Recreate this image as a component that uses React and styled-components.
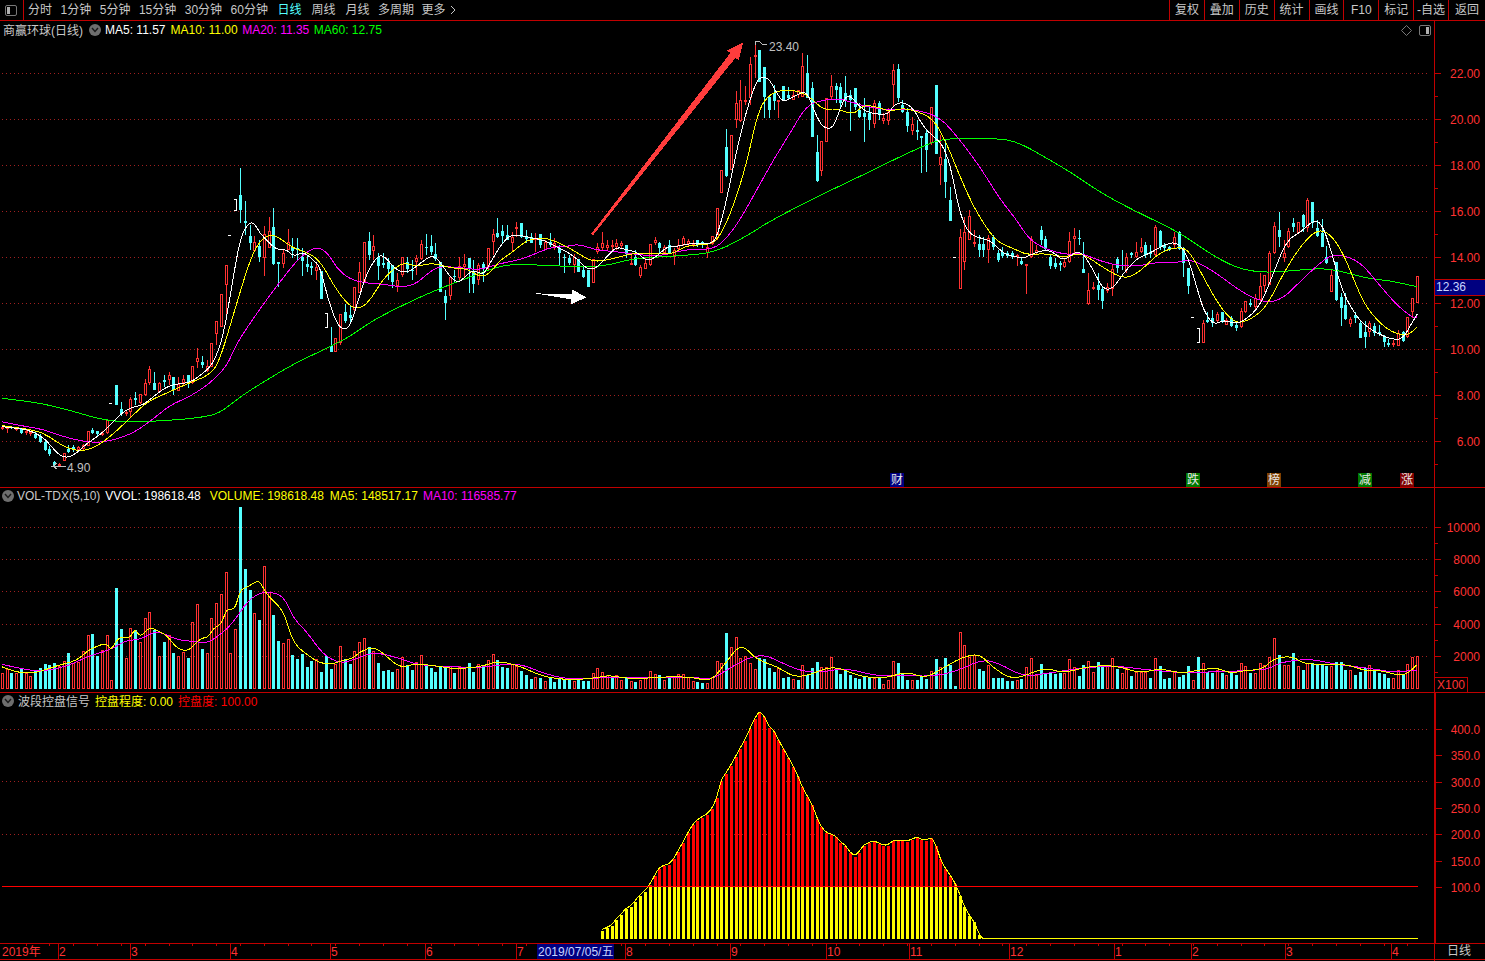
import React from "react";
import styled, { createGlobalStyle } from "styled-components";

const FONT = '"Liberation Sans", "Noto Sans CJK SC", sans-serif';
const RED = "#ff3232";
const CYAN = "#54ffff";
const LINE = "#c00000";
const GRID = "#a02020";

// x of candle number i
const barX = (i) => Math.round(1.75 + 4.765 * i);

// chart points were read off crops of the chart, so they carry crop offset and scale
const crop = (flat, ox, oy, sx = 3, sy = 3) => {
  const pts = [];
  for (let i = 0; i < flat.length; i += 2) pts.push([ox + flat[i] / sx, oy + flat[i + 1] / sy]);
  return pts;
};

const smooth = (pts) => {
  let d = `M${pts[0][0]} ${pts[0][1]}`;
  for (let i = 1; i < pts.length - 1; i++) {
    const mx = (pts[i][0] + pts[i + 1][0]) / 2;
    const my = (pts[i][1] + pts[i + 1][1]) / 2;
    d += `Q${pts[i][0]} ${pts[i][1]} ${mx} ${my}`;
  }
  const last = pts[pts.length - 1];
  return d + `L${last[0]} ${last[1]}`;
};

// kind, body top, body bottom, wick top, wick bottom
const CANDLE_TEXT = `
r427 429 426 430,r427 428 426 433,c427 428 426 429,r428 429 427 431,c429 433 428 434,r431 432 429 435,r432 433 431 436,c434 438 432 439,c436 442 434 443,c442 450 440 451,
c449 454 446 456,c462 465 461 466,r464 466 463 466,r453 461 453 461,c449 452 445 453,c447 450 445 452,r447 450 446 451,r445 449 444 450,r431 446 431 446,c430 433 428 434,
c431 434 431 437,r433 435 431 436,r420 433 420 434,w403 403 403 403,c385 405 385 405,c409 414 402 416,r412 414 410 416,r399 412 397 417,c398 400 392 405,r394 403 394 404,
r383 395 379 396,r369 383 366 385,c383 390 372 390,r383 392 382 392,c380 382 375 387,r375 380 372 385,c377 390 377 395,r384 391 377 391,r379 383 375 385,c375 383 375 388,
r366 383 366 384,r358 362 348 368,c362 365 356 368,r366 371 360 372,r343 367 343 367,r321 334 321 345,r294 327 294 327,r265 285 265 315,w235 235 235 235,w199 211 199 211,
c195 210 168 223,c221 223 201 235,c236 243 225 250,r242 251 236 252,c246 257 240 262,r234 258 226 276,r231 248 217 248,c227 264 208 265,c262 264 262 287,r253 264 249 268,
r242 250 229 250,c247 251 238 258,c248 250 238 260,c257 261 248 276,c264 267 255 272,c266 268 262 275,r267 271 263 280,c271 299 271 299,w313 328 313 328,c346 352 327 352,
r338 352 338 352,r314 343 314 345,c312 321 304 323,c315 318 305 323,r287 310 287 312,r272 293 262 293,r242 283 242 283,c241 255 232 260,r246 251 235 260,c257 266 253 280,
c263 265 253 268,c262 269 258 280,c265 282 265 288,r280 286 273 292,r257 275 257 277,c262 269 257 273,c270 271 260 280,r258 262 255 275,r244 259 240 260,c247 248 234 255,
c246 252 235 255,c254 259 243 261,c262 292 262 292,c296 303 290 320,r277 296 277 300,c276 277 270 283,r266 278 257 282,r264 267 254 278,c258 268 258 293,c272 284 260 293,
r265 280 263 285,c264 268 262 282,r248 267 248 270,r234 242 229 255,c233 237 218 238,c231 236 225 243,c235 240 225 240,r237 243 232 252,r227 229 222 237,c223 237 223 238,
c237 239 230 243,c237 243 233 243,r238 240 233 252,c234 245 234 248,r242 250 240 250,c242 245 233 247,r243 247 238 250,c248 253 245 265,c257 258 254 273,c258 263 255 265,
r257 265 254 273,c259 272 259 272,c270 277 267 278,c270 287 270 287,r259 283 259 283,r247 252 243 254,r243 248 232 250,r245 248 240 250,r245 247 240 250,r243 247 239 250,
r243 246 241 248,c245 254 245 258,r263 265 253 265,c257 265 250 266,r267 276 265 278,r263 269 257 269,r244 265 244 266,r240 243 237 245,c243 248 242 253,r247 253 245 254,
c245 254 240 254,r250 257 248 265,r245 249 239 250,r238 245 236 246,r241 244 239 247,r243 245 240 247,c240 245 240 247,c242 245 241 248,r247 253 245 258,r236 244 236 245,
r208 238 208 240,r170 193 170 193,c147 176 129 177,r135 170 135 170,r103 120 91 128,r100 121 80 122,r100 102 86 105,r64 98 57 105,r55 57 45 78,c50 82 50 82,
c67 97 67 118,c97 110 97 118,c93 101 85 110,r100 102 102 118,c86 100 86 100,c95 98 87 100,r95 100 90 100,r90 95 90 98,r66 97 53 97,c73 98 55 98,
c88 137 82 137,c152 181 135 182,r141 171 141 176,r98 142 98 142,r86 97 75 100,c86 90 83 103,c87 103 83 107,c93 100 76 107,c95 100 90 131,c88 107 88 110,
c110 117 103 118,c113 117 98 142,c113 120 107 130,r103 124 100 128,c103 115 101 120,r118 121 113 124,r112 121 108 125,r70 85 64 107,c69 98 64 102,c105 112 100 113,
c112 126 108 132,r124 131 117 135,c130 132 120 140,c136 138 136 173,c133 150 130 172,r107 143 107 145,c85 154 85 154,r157 165 135 185,c159 182 140 198,c200 221 187 221,
w257 257 257 257,r237 289 229 289,r232 262 217 270,r216 240 210 240,r242 243 230 247,c244 250 235 257,c244 250 237 257,r238 250 235 263,c237 247 235 250,c253 260 250 262,
c252 256 247 258,c253 256 251 258,c253 257 251 259,r255 257 254 266,c261 264 257 265,r264 266 264 294,r239 257 236 258,r250 253 245 254,c230 240 226 245,c239 249 236 250,
c257 266 255 269,c263 267 258 269,c263 265 261 271,r262 267 258 268,r241 262 232 263,r236 239 228 253,c238 239 230 245,c269 273 242 273,r290 304 273 305,r287 289 282 290,
c285 290 273 300,c289 301 287 309,r287 291 283 293,r269 289 265 296,c259 268 257 273,c265 266 250 270,r257 270 253 273,c253 255 252 258,r252 257 242 258,r247 252 238 253,
c245 255 242 258,c252 254 245 258,r227 255 225 256,c231 247 230 250,c245 248 243 251,c247 250 246 251,r237 245 232 248,c232 249 231 250,c249 263 247 277,c268 286 268 294,
w317 317 317 317,w328 343 328 343,r323 343 320 343,c320 322 312 323,c318 323 310 327,r314 321 312 323,c312 322 312 323,r320 325 318 325,c318 326 316 327,c325 328 323 331,
r311 327 308 328,r301 312 301 313,c303 305 299 307,r298 307 294 309,r286 300 273 302,r275 286 275 292,r253 285 251 285,r226 253 222 254,c230 237 212 247,r253 258 240 262,
r231 247 228 248,c223 227 218 232,r222 233 222 234,c215 227 214 232,r200 228 198 232,c202 223 202 228,c228 236 220 237,c233 247 219 247,c257 263 246 264,r275 292 270 292,
c262 300 262 301,c297 308 293 326,c305 319 293 320,r319 324 317 327,c315 318 312 323,c323 338 321 338,c332 337 321 348,r323 332 321 337,c326 333 323 336,c332 334 325 336,
c337 342 335 347,c343 345 339 347,r343 344 340 347,r333 346 330 346,c332 341 331 342,r317 337 317 338,r298 312 298 318,r276 303 276 303`;

const CANDLES = [...CANDLE_TEXT.matchAll(/([rcw])(\d+) (\d+) (\d+) (\d+)/g)].map((m) => ({
  kind: m[1],
  top: +m[2],
  bot: +m[3],
  hi: +m[4],
  lo: +m[5],
}));

const MA5 = [
  ...crop([5,800,60,805,100,815,140,840,170,880,200,895,230,880,260,850,300,825,330,795,370,755,400,740,430,735,460,710,500,680,530,672,570,668,610,640,640,610,670,530,700,350,720,240,740,195,760,185,780,220,800,240,830,270,860,268,880,290,910,275,940,300,960,320,985,420,1010,490,1030,510,1050,500,1075,420,1100,340,1130,290,1150,285,1180,320,1200,335,1230,335,1260,310,1300,282,1330,320,1350,350,1375,370,1400,345,1420,330,1450,345,1470,310], 0, 160),
  ...crop([0,648,30,615,60,615,100,625,130,630,170,650,200,665,230,685,260,718,290,715,320,680,350,650,380,660,410,665,440,695,470,680,500,650,530,650,570,640,630,643,650,625,680,510,710,360,740,240,770,150,790,140,810,150,830,190,850,217,880,200,920,180,945,250,970,295,1000,295,1020,235,1040,195,1060,205,1080,232,1110,250,1165,255,1180,225,1210,215,1240,235,1270,290,1300,320,1325,340,1350,400,1375,530,1395,590,1420,620,1470,630], 500, 30),
  ...crop([0,180,20,195,70,205,90,195,130,180,160,185,190,215,240,175,280,240,310,300,340,295,370,250,410,205,450,190,490,165,530,155,560,190,590,290,610,360,640,405,670,390,700,400,730,395,780,350,820,250,860,150,905,125,940,90,965,100,990,170,1020,280,1040,330,1080,395,1130,430,1180,450,1210,445,1235,400,1252,372], 1000, 190),
];

const MA10 = [
  ...crop([5,797,100,808,150,830,190,860,250,877,310,848,380,785,440,725,510,695,560,672,630,645,660,600,710,430,750,300,780,240,815,222,840,235,880,265,930,280,965,310,1000,375,1040,430,1070,448,1105,430,1150,355,1190,320,1215,308,1250,320,1300,308,1350,325,1400,325,1440,352,1470,340], 0, 160),
  ...crop([0,690,40,665,80,630,130,622,170,635,210,655,250,680,275,693,310,693,370,678,400,670,430,672,470,670,520,672,560,645,630,645,660,620,700,530,740,400,775,240,810,190,860,178,900,185,935,205,970,240,1010,235,1060,255,1090,225,1130,230,1170,245,1200,235,1240,240,1300,265,1340,340,1380,440,1420,530,1470,610], 500, 30),
  ...crop([0,160,40,175,80,195,140,190,190,202,240,190,270,205,320,240,375,268,420,245,480,185,540,170,570,185,620,280,660,350,700,395,730,398,780,370,810,330,850,250,900,170,950,118,990,130,1030,190,1070,290,1100,355,1160,420,1220,440,1250,412], 1000, 190),
];

const MA20 = [
  ...crop([5,785,50,795,130,808,180,827,250,845,310,848,390,825,450,785,510,735,570,710,630,670,680,620,710,550,770,460,840,365,900,290,950,258,985,280,1010,325,1050,358,1100,370,1150,372,1190,380,1240,378,1290,335,1320,318,1400,325,1440,330], 0, 160),
  ...crop([0,700,60,690,120,665,160,650,200,650,230,643,260,650,290,660,350,665,420,675,480,678,530,665,570,658,640,658,680,625,720,570,770,480,820,390,870,310,920,225,970,210,1020,205,1080,225,1150,240,1240,237,1320,260,1380,330,1440,410], 500, 30),
  ...crop([0,28,50,90,85,145,130,175,200,195,240,188,280,205,340,225,410,230,480,215,530,218,560,210,590,215,650,250,730,310,800,340,850,325,900,275,980,200,1020,193,1080,215,1130,275,1190,345,1240,385,1252,380], 1000, 190),
];

const MA60 = [
  ...crop([5,715,100,725,200,748,300,778,380,787,500,782,600,773,660,760,720,710,800,660,880,612,980,565,1050,530,1120,480,1230,425,1320,385,1400,355], 0, 160),
  ...crop([0,707,60,703,160,707,260,712,330,705,400,685,530,678,650,668,770,600,790,585,920,515,1120,420,1210,375,1300,335,1350,325,1500,325], 500, 30),
  ...crop([60,-141,150,-90,225,-45,290,0,360,40,450,85,540,128,620,185,700,230,770,247,850,245,950,235,1010,240,1100,265,1170,272,1250,290], 1000, 190),
];

// volume bar tops read off three crops, a minus sign marks a falling (cyan) day
const VOL_A = [520,508,-518,518,-505,518,527,-510,-503,-492,-495,-490,498,483,-460,490,487,453,405,-402,-468,450,405,540,-264,-387,475,385,-390,427,353,337,-390,468,-427,405,-460,468,457,-475,367,313,-447,460,353,310,283,217,460,387,-20,-207,-270,340,-360,198,275,-345,-423,430,417,-465,-477,-462,-500,-483,478,-515,-468,-507,493,438,-478,-492,453,427,415,-440,453,-488,-513,-510,-515,507];
const VOL_B = [97,-120,-135,112,90,-120,-128,-140,-125,-130,122,-145,122,130,-113,-140,118,-122,105,88,-105,-125,-128,118,122,-138,-150,-162,155,-158,167,-160,-170,-158,-165,-165,167,-165,-167,-167,145,130,142,150,-155,150,165,-160,168,-170,165,160,138,148,-150,165,-155,155,148,148,155,168,-170,-173,175,157,108,113,-25,67,37,100,93,113,133,-100,-103,-130,-140,130,-158,-155,162,-165,120,-150,-130,-112,125,125,95,-133,-148,-138,-150,-158,-162,-152,-158,158,-160,178,165,108,-115,-145,-165,165,-165,-155,-162,138,-102,125,-100,-120,-183,22,60,95,90,-133,-138,120,-160,-160,-160,-168,-167,165,-162,125,100,150,-118,-148,-142,-148,-145,145,103,125,-153,-120,107,140,-112,-120,120,100,-132,145,130,-152,140,142,142,-158,100,-123,-162,-160,140,-155,-150,-123,165,-96];
const VOL_C = [130,-155,-158,150,-158,165,-160,-165,130,138,-158,160,130,135,112,55,-105,135,135,-100,138,-150,130,-128,-135,-132,-138,138,-127,-127,-150,150,-165,-155,-145,135,-152,-158,-162,-173,175,150,-165,132,112,108];

const VOLUMES = [
  ...VOL_A.map((z) => ({ top: 500 + Math.abs(z) / 3, up: z > 0 })),
  ...VOL_B.map((z) => ({ top: 625 + Math.abs(z) / 3, up: z > 0 })),
  ...VOL_C.map((z) => ({ top: 620 + Math.abs(z) / 3, up: z > 0 })),
];

const VOL_MA5 = [
  ...crop([5,500,40,515,90,520,130,512,170,497,230,482,260,455,280,443,320,428,333,453,355,410,390,415,405,385,420,413,450,380,470,392,500,405,530,445,565,455,600,415,625,412,640,385,665,372,680,325,705,330,720,270,740,262,760,250,778,240,800,285,850,330,870,400,890,440,930,470,960,490,1000,492,1030,480,1060,475,1080,455,1120,440,1150,460], 0, 500),
  ...crop([0,130,30,115,80,125,110,132,160,125,190,108,230,120,280,155,330,165,380,160,410,150,450,162,500,158,530,155,575,157,610,170,640,110,660,70,675,65,700,105,740,125,770,155,800,152,850,120,900,155,950,160,980,145,1005,145,1030,160,1075,120,1100,98,1135,85,1160,125,1195,160,1220,155,1265,127,1300,145,1345,125,1400,120,1450,145,1490,130,1530,145], 400, 625, 1.96, 3),
  ...crop([0,150,50,143,90,160,130,152,190,148,220,115,280,108,310,133,400,132,450,135,500,155,540,150,590,165,620,163,650,135], 1200, 620),
];

const VOL_MA10 = [
  ...crop([5,493,60,505,120,515,200,500,260,470,330,450,380,420,420,420,470,390,530,420,590,425,620,430,660,405,700,368,730,320,765,285,800,275,850,285,880,355,920,395,970,465,1020,490,1060,480,1120,455], 0, 500),
  ...crop([0,100,35,120,90,125,160,128,200,118,240,118,280,145,330,163,380,160,430,155,500,160,570,155,610,165,640,135,680,100,715,88,750,115,790,140,830,142,870,128,940,155,985,150,1040,155,1090,140,1140,103,1175,115,1220,155,1270,145,1330,130,1400,122,1450,132,1530,143], 400, 625, 1.96, 3),
  ...crop([0,157,50,155,100,155,130,150,200,150,240,128,290,120,340,118,400,132,480,142,530,148,580,157,650,150], 1200, 620),
];

// signal bars start at candle 126
const SIGNAL_START = 126;
const SIGNAL_TOPS = [692,685,677,660,645,628,620,605,587,575,555,527,507,498,495,478,455,430,400,375,363,353,345,328,295,243,222,197,170,147,122,88,57,37,50,83,95,120,147,173,200,232,262,290,315,357,382,400,405,412,428,437,460,470,458,437,430,426,432,438,438,424,423,423,426,420,414,420,424,414,437,478,507,527,552,587,620,648,667,705].map((z) => 700 + z / 3);
const SIGNAL_BASE = 939;
const SIGNAL_SPLIT = 887;

const MAIN_GRID = [73, 119, 165, 211, 257, 303, 349, 395, 441];
const VOL_GRID = [527, 559, 591, 624, 656];
const SIGNAL_GRID = [729, 781, 834];

const MAIN_LABELS = [["22.00", 73], ["20.00", 119], ["18.00", 165], ["16.00", 211], ["14.00", 257], ["12.00", 303], ["10.00", 349], ["8.00", 395], ["6.00", 441]];
const MAIN_MINOR = [96, 142, 188, 234, 280, 326, 372, 418, 464];
const VOL_LABELS = [["10000", 527], ["8000", 559], ["6000", 591], ["4000", 624], ["2000", 656]];
const VOL_MINOR = [543, 575, 607, 640, 672];
const SIGNAL_LABELS = [["400.0", 729], ["350.0", 755], ["300.0", 782], ["250.0", 808], ["200.0", 834], ["150.0", 861], ["100.0", 887]];

const MONTHS = [["2", 58], ["3", 130], ["4", 230], ["5", 330], ["6", 425], ["7", 516], ["8", 625], ["9", 730], ["10", 826], ["11", 909], ["12", 1009], ["1", 1114], ["2", 1191], ["3", 1285], ["4", 1391]];

const PERIODS = [
  { name: "分时" },
  { name: "1分钟" },
  { name: "5分钟" },
  { name: "15分钟" },
  { name: "30分钟" },
  { name: "60分钟" },
  { name: "日线", extra: 1, active: true },
  { name: "周线", extra: 1.5 },
  { name: "月线", extra: 1.5 },
  { name: "多周期" },
];
const TOOLS = ["复权", "叠加", "历史", "统计", "画线", "F10", "标记", "-自选", "返回"];
const BADGES = [
  { text: "财", left: 890, color: "#000080" },
  { text: "跌", left: 1186, color: "#007800" },
  { text: "榜", left: 1267, color: "#804000" },
  { text: "减", left: 1358, color: "#007800" },
  { text: "涨", left: 1400, color: "#800000" },
];

const GlobalStyle = createGlobalStyle`
  html, body { margin: 0; padding: 0; background: #000; overflow: hidden; }
  * { box-sizing: border-box; }
`;

const Page = styled.div`
  width: 1485px;
  height: 961px;
  background: #000;
  font-family: ${FONT};
  font-size: 12px;
  color: #c8c8c8;
  overflow: hidden;
`;

const Toolbar = styled.div`
  height: 21px;
  display: flex;
  align-items: center;
  border-bottom: 1px solid ${LINE};
`;

const LogoCell = styled.div`
  width: 24px;
  height: 20px;
  padding-left: 5px;
  display: flex;
  align-items: center;
  border-right: 1px solid ${LINE};
`;

const Periods = styled.div`
  display: flex;
  align-items: center;
  gap: 8.5px;
  padding-left: 4px;
  flex: 1;
`;

const PeriodBtn = styled.span`
  line-height: 20px;
  white-space: nowrap;
  margin-left: ${(p) => p.$extra || 0}px;
  color: ${(p) => (p.$active ? CYAN : "#c8c8c8")};
`;

const MoreBtn = styled(PeriodBtn)`
  display: flex;
  align-items: center;
  gap: 4px;
  margin-left: -1px;
`;

const Tools = styled.div`
  display: flex;
  height: 20px;
`;

const ToolBtn = styled.span`
  width: 34.875px;
  line-height: 20px;
  text-align: center;
  white-space: nowrap;
  border-left: 1px solid ${LINE};
  color: #c8c8c8;
  &:last-child {
    width: 37px;
  }
`;

const Pane = styled.div`
  display: flex;
  height: ${(p) => p.$height}px;
  border-bottom: 1px solid ${LINE};
`;

const ChartArea = styled.div`
  position: relative;
  width: 1434px;
  height: 100%;
  flex: none;
`;

const AxisArea = styled.div`
  position: relative;
  flex: 1;
  height: 100%;
  border-left: ${(p) => p.$line || 1}px solid ${LINE};
`;

const Plot = styled.svg`
  display: block;
  width: 100%;
  height: 100%;
  shape-rendering: crispEdges;
`;

const AxisLabel = styled.text`
  font-family: ${FONT};
  font-size: 12px;
  fill: ${RED};
  text-anchor: end;
  dominant-baseline: central;
`;

const MarkLabel = styled.text`
  font-family: ${FONT};
  font-size: 12px;
  fill: ${(p) => p.$color || "#c0c0c0"};
  dominant-baseline: central;
`;

const Legend = styled.div`
  position: absolute;
  top: ${(p) => p.$top || 0}px;
  left: ${(p) => p.$left || 2}px;
  height: 17px;
  display: flex;
  align-items: center;
  white-space: nowrap;
`;

const LegendItem = styled.span`
  color: ${(p) => p.$color || "#c8c8c8"};
  margin-left: ${(p) => p.$gap || 0}px;
`;

const Chevron = styled.span`
  width: 12px;
  height: 12px;
  border-radius: 50%;
  background: #6e6e6e;
  display: flex;
  align-items: center;
  justify-content: center;
  margin-left: ${(p) => p.$gap || 0}px;
  flex: none;
`;

const CornerIcons = styled.div`
  position: absolute;
  top: 4px;
  right: 3px;
  display: flex;
  align-items: center;
  gap: 7px;
`;

const Badge = styled.span`
  position: absolute;
  bottom: 0;
  left: ${(p) => p.$left}px;
  width: 14px;
  height: 14px;
  background: ${(p) => p.$color};
  color: #e8e8e8;
  font-size: 12px;
  line-height: 14px;
  text-align: center;
`;

const PriceTag = styled.div`
  position: absolute;
  top: 258px;
  left: 0;
  right: 0;
  height: 17px;
  padding-left: 1px;
  background: #000080;
  border-top: 1px solid ${LINE};
  border-bottom: 1px solid ${LINE};
  color: #c8d4ff;
  line-height: 15px;
`;

const UnitBox = styled.div`
  position: absolute;
  left: 0;
  bottom: 0;
  width: 33px;
  height: 15px;
  border: 1px solid ${LINE};
  border-left: none;
  border-bottom: none;
  color: ${RED};
  line-height: 14px;
  text-align: center;
`;

const DateRow = styled.div`
  display: flex;
  height: 16px;
  border-bottom: 1px solid ${LINE};
`;

const DateCell = styled.div`
  flex: 1;
  border-left: 1px solid ${LINE};
  color: #c8c8c8;
  line-height: 15px;
  text-align: center;
  padding-right: 2px;
  height: 17px;
`;

const Grid = ({ rows }) =>
  rows.map((y) => (
    <line key={y} x1="2" x2="1430" y1={y + 0.5} y2={y + 0.5} stroke={GRID} strokeDasharray="1 3" />
  ));

const Line = ({ pts, color }) => <path d={smooth(pts)} fill="none" stroke={color} strokeWidth="1" />;

function Candle({ item, index }) {
  const x = barX(index);
  if (item.kind === "w") {
    if (item.hi === item.lo) return <rect x={x - 2} y={item.hi} width="3" height="1" fill="#fff" />;
    return (
      <g fill="#fff">
        <rect x={x + 1} y={item.hi} width="1" height={item.lo - item.hi} />
        <rect x={x - 1} y={item.hi} width="2" height="1" />
        <rect x={x - 1} y={item.lo - 1} width="2" height="1" />
      </g>
    );
  }
  if (item.kind === "c") {
    return (
      <g fill={CYAN}>
        <rect x={x} y={item.hi} width="1" height={item.lo - item.hi} />
        <rect x={x - 1} y={item.top} width="3" height={Math.max(item.bot - item.top, 1)} />
      </g>
    );
  }
  return (
    <g>
      <rect x={x} y={item.hi} width="1" height={item.top - item.hi} fill={RED} />
      <rect x={x} y={item.bot} width="1" height={item.lo - item.bot} fill={RED} />
      <rect x={x - 0.5} y={item.top + 0.5} width="2" height={Math.max(item.bot - item.top - 1, 1)} fill="#000" stroke={RED} />
    </g>
  );
}

function VolumeBar({ bar, index }) {
  const x = barX(index);
  const h = 689 - bar.top;
  if (!bar.up) return <rect x={x - 1} y={bar.top} width="3" height={h} fill={CYAN} />;
  return <rect x={x - 0.5} y={bar.top + 0.5} width="2" height={h - 1} fill="#000" stroke={RED} />;
}

function SignalBar({ top, index }) {
  const x = barX(index + SIGNAL_START) - 1;
  return (
    <g>
      {top < SIGNAL_SPLIT && <rect x={x} y={top} width="3" height={SIGNAL_SPLIT - top} fill="#ff0000" />}
      <rect x={x} y={Math.max(top, SIGNAL_SPLIT)} width="3" height={SIGNAL_BASE - Math.max(top, SIGNAL_SPLIT)} fill="#ffff00" />
    </g>
  );
}

const ChevronGlyph = () => (
  <svg width="8" height="6" viewBox="0 0 8 6">
    <polyline points="1,1 4,4.5 7,1" fill="none" stroke="#1a1a1a" strokeWidth="1.4" />
  </svg>
);

const PanelIcon = ({ side }) => (
  <svg width="12" height="11" viewBox="0 0 12 11">
    <rect x="0.5" y="0.5" width="11" height="10" rx="1.5" fill="none" stroke="#787878" />
    <rect x={side === "left" ? 2 : 7} y="2" width="3" height="7" fill="#b0b0b0" />
  </svg>
);

const Scale = ({ top, height, labels, minor, x2 = 6 }) => (
  <Plot viewBox={`0 ${top} 50 ${height}`} preserveAspectRatio="none">
    {labels.map(([text, y]) => (
      <g key={text}>
        <rect x="0" y={y} width={x2} height="1" fill={LINE} />
        <AxisLabel x="45" y={y + 1}>{text}</AxisLabel>
      </g>
    ))}
    {(minor || []).map((y) => (
      <rect key={y} x="0" y={y} width="3" height="1" fill={LINE} />
    ))}
  </Plot>
);

function MainPane() {
  const redArrow = crop([730,37,680,62,692,68,273,612,278,617,706,84,716,90], 500, 30);
  const whiteArrow = crop([105,790,215,793,215,778,260,802,212,823,212,808], 500, 30);
  const toPoints = (pts) => pts.map((p) => p.join(",")).join(" ");
  return (
    <Pane $height={467}>
      <ChartArea>
        <Plot viewBox="0 21 1434 466">
          <Grid rows={MAIN_GRID} />
          {CANDLES.map((c, i) => (
            <Candle key={i} item={c} index={i} />
          ))}
          <Line pts={MA60} color="#00ff00" />
          <Line pts={MA20} color="#ff00ff" />
          <Line pts={MA10} color="#ffff00" />
          <Line pts={MA5} color="#ffffff" />
          <polygon points={toPoints(redArrow)} fill="#ff3c3c" />
          <polygon points={toPoints(whiteArrow)} fill="#ffffff" />
          <polyline points="755,45 755,41 759,41 762,44 767,45" fill="none" stroke="#c0c0c0" />
          <MarkLabel x="769" y="47">23.40</MarkLabel>
          <polyline points="57,463 53,466 66,466" fill="none" stroke="#c0c0c0" />
          <polyline points="53,466 57,469" fill="none" stroke="#c0c0c0" />
          <MarkLabel x="67" y="468">4.90</MarkLabel>
        </Plot>
        <Legend $left={3}>
          <LegendItem>商赢环球(日线)</LegendItem>
          <Chevron $gap={6}>
            <ChevronGlyph />
          </Chevron>
          <LegendItem $gap={4} $color="#ffffff">MA5: 11.57</LegendItem>
          <LegendItem $gap={5} $color="#ffff00">MA10: 11.00</LegendItem>
          <LegendItem $gap={4.5} $color="#ff00ff">MA20: 11.35</LegendItem>
          <LegendItem $gap={4.5} $color="#00ff00">MA60: 12.75</LegendItem>
        </Legend>
        <CornerIcons>
          <svg width="11" height="11" viewBox="0 0 11 11">
            <polygon points="5.5,0.5 10.5,5.5 5.5,10.5 0.5,5.5" fill="none" stroke="#787878" />
          </svg>
          <PanelIcon side="right" />
        </CornerIcons>
        {BADGES.map((b) => (
          <Badge key={b.text} $left={b.left} $color={b.color}>{b.text}</Badge>
        ))}
      </ChartArea>
      <AxisArea>
        <Scale top={21} height={466} labels={MAIN_LABELS} minor={MAIN_MINOR} />
        <PriceTag>12.36</PriceTag>
      </AxisArea>
    </Pane>
  );
}

function VolumePane() {
  return (
    <Pane $height={205}>
      <ChartArea>
        <Plot viewBox="0 488 1434 204">
          <Grid rows={VOL_GRID} />
          {VOLUMES.map((b, i) => (
            <VolumeBar key={i} bar={b} index={i} />
          ))}
          <Line pts={VOL_MA10} color="#ff00ff" />
          <Line pts={VOL_MA5} color="#ffff00" />
        </Plot>
        <Legend $top={-1}>
          <Chevron>
            <ChevronGlyph />
          </Chevron>
          <LegendItem $gap={3}>VOL-TDX(5,10)</LegendItem>
          <LegendItem $gap={5} $color="#ffffff">VVOL: 198618.48</LegendItem>
          <LegendItem $gap={9} $color="#ffff00">VOLUME: 198618.48</LegendItem>
          <LegendItem $gap={6} $color="#ffff00">MA5: 148517.17</LegendItem>
          <LegendItem $gap={5} $color="#ff00ff">MA10: 116585.77</LegendItem>
        </Legend>
      </ChartArea>
      <AxisArea>
        <Scale top={488} height={204} labels={VOL_LABELS} minor={VOL_MINOR} />
        <UnitBox>X100</UnitBox>
      </AxisArea>
    </Pane>
  );
}

function SignalPane() {
  const outline = SIGNAL_TOPS.map((top, i) => [barX(i + SIGNAL_START), top - 1]);
  const flatFrom = barX(SIGNAL_START + SIGNAL_TOPS.length);
  return (
    <Pane $height={251}>
      <ChartArea>
        <Plot viewBox="0 693 1434 250">
          <Grid rows={SIGNAL_GRID} />
          {SIGNAL_TOPS.map((top, i) => (
            <SignalBar key={i} top={top} index={i} />
          ))}
          <Line pts={[...outline, [flatFrom, 938.5]]} color="#ffff00" />
          <rect x={flatFrom} y="938" width={1418 - flatFrom} height="1" fill="#ffff00" />
          <rect x="2" y={SIGNAL_SPLIT - 1} width="1416" height="1" fill="#ff0000" />
        </Plot>
        <Legend $top={-1}>
          <Chevron>
            <ChevronGlyph />
          </Chevron>
          <LegendItem $gap={4}>波段控盘信号</LegendItem>
          <LegendItem $gap={5} $color="#ffff00">控盘程度: 0.00</LegendItem>
          <LegendItem $gap={5} $color="#ff0000">控盘度: 100.00</LegendItem>
        </Legend>
      </ChartArea>
      <AxisArea $line={2}>
        <Scale top={693} height={250} labels={SIGNAL_LABELS} />
      </AxisArea>
    </Pane>
  );
}

function TimeAxis() {
  const ticks = [];
  for (let i = 5; i < 298; i += 5) ticks.push(barX(i));
  return (
    <ChartArea>
      <Plot viewBox="0 944 1434 15">
        {ticks.map((x) => (
          <rect key={x} x={x} y="944" width="1" height="2" fill={LINE} />
        ))}
        {MONTHS.map(([text, x]) => (
          <g key={x}>
            <rect x={x} y="944" width="1" height="15" fill={LINE} />
            <MarkLabel x={x + 1} y="952" $color={RED}>{text}</MarkLabel>
          </g>
        ))}
        <MarkLabel x="2" y="952" $color={RED}>2019年</MarkLabel>
        <rect x="537" y="944" width="77" height="15" fill="#000080" />
        <MarkLabel x="538" y="952" $color="#c8d4ff">2019/07/05/五</MarkLabel>
      </Plot>
    </ChartArea>
  );
}

function App() {
  return (
    <Page>
      <GlobalStyle />
      <Toolbar>
        <LogoCell>
          <PanelIcon side="left" />
        </LogoCell>
        <Periods>
          {PERIODS.map((p) => (
            <PeriodBtn key={p.name} $active={p.active} $extra={p.extra}>{p.name}</PeriodBtn>
          ))}
          <MoreBtn>
            更多
            <svg width="6" height="10" viewBox="0 0 6 10">
              <polyline points="1,1 5,5 1,9" fill="none" stroke="#c8c8c8" />
            </svg>
          </MoreBtn>
        </Periods>
        <Tools>
          {TOOLS.map((name) => (
            <ToolBtn key={name}>{name}</ToolBtn>
          ))}
        </Tools>
      </Toolbar>
      <MainPane />
      <VolumePane />
      <SignalPane />
      <DateRow>
        <TimeAxis />
        <DateCell>日线</DateCell>
      </DateRow>
    </Page>
  );
}

export default App;
